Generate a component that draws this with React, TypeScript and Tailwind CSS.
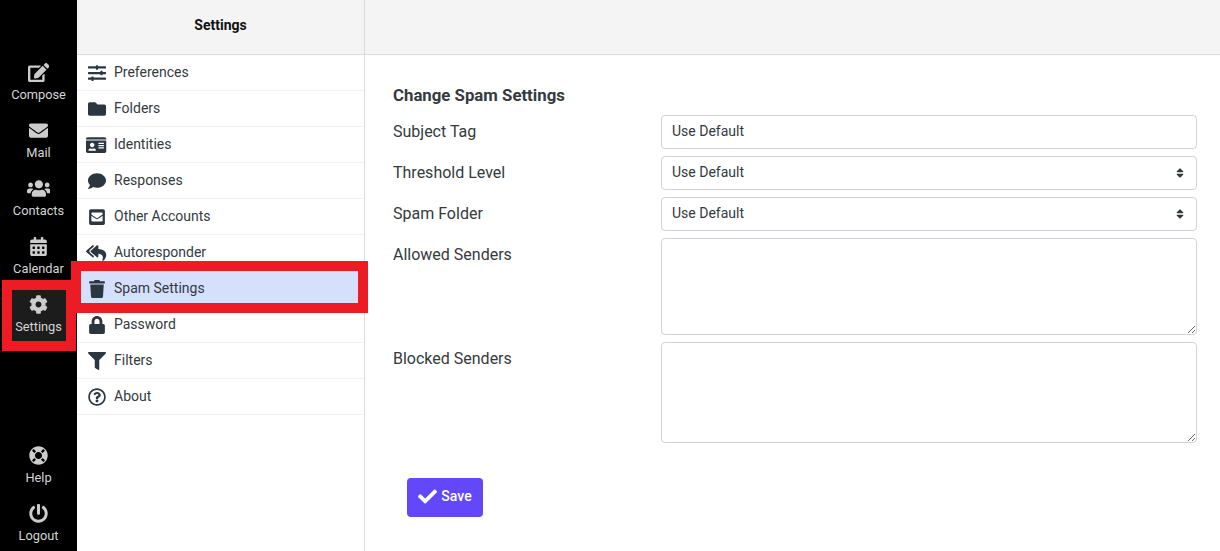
import React from 'react';
import {
  FaCalendarAlt,
  FaCheck,
  FaCog,
  FaComment,
  FaEdit,
  FaEnvelope,
  FaEnvelopeSquare,
  FaFilter,
  FaFolder,
  FaIdCard,
  FaLifeRing,
  FaLock,
  FaPowerOff,
  FaRegQuestionCircle,
  FaReplyAll,
  FaSlidersH,
  FaSort,
  FaTrash,
  FaUsers,
} from 'react-icons/fa';

// react-icons squeezes everything into a 1em box, wide glyphs need their real width back
const topNav = [
  { label: 'Compose', icon: FaEdit, iconWidth: 'w-[1.125em]' },
  { label: 'Mail', icon: FaEnvelope },
  { label: 'Contacts', icon: FaUsers, iconWidth: 'w-[1.25em]' },
  { label: 'Calendar', icon: FaCalendarAlt },
  { label: 'Settings', icon: FaCog, active: true },
];

const bottomNav = [
  { label: 'Help', icon: FaLifeRing },
  { label: 'Logout', icon: FaPowerOff },
];

const settingsItems = [
  { label: 'Preferences', icon: FaSlidersH },
  { label: 'Folders', icon: FaFolder },
  { label: 'Identities', icon: FaIdCard, iconWidth: 'w-[1.125em]' },
  { label: 'Responses', icon: FaComment },
  { label: 'Other Accounts', icon: FaEnvelopeSquare },
  { label: 'Autoresponder', icon: FaReplyAll, iconWidth: 'w-[1.125em]' },
  { label: 'Spam Settings', icon: FaTrash, active: true },
  { label: 'Password', icon: FaLock },
  { label: 'Filters', icon: FaFilter },
  { label: 'About', icon: FaRegQuestionCircle },
];

type NavItem = {
  label: string;
  icon: React.ComponentType<{ className?: string }>;
  iconWidth?: string;
  active?: boolean;
};

const RailLink = ({ item }: { item: NavItem }) => (
  <div
    className={`mx-auto flex h-[51px] w-[54px] flex-col items-center justify-end pb-[7px] text-[12.8px] leading-[15px] text-[#d4d4d4] ${
      item.active ? 'bg-[#1c1c1c]' : ''
    }`}
  >
    <item.icon className={`mb-[5px] shrink-0 text-[19px] text-[#cccccc] ${item.iconWidth ?? ''}`} />
    <span>{item.label}</span>
  </div>
);

const SelectField = () => (
  <div className="relative h-[34px]">
    <select className="h-full w-full appearance-none rounded border border-[#ced4da] bg-white pb-[2px] pl-[10px] pr-[11px] text-[14px] text-[#343a40] outline-none">
      <option>Use Default</option>
    </select>
    <FaSort className="pointer-events-none absolute right-[11px] top-[11px] text-[12px] text-[#343a40]" />
  </div>
);

const App = () => {
  return (
    <div className="relative flex h-[551px] w-[1220px] overflow-hidden bg-white font-['Roboto',sans-serif]">
      {/* Icon rail */}
      <aside className="flex w-[77px] shrink-0 flex-col bg-black pt-[58px]">
        <div className="flex flex-col gap-[7px]">
          {topNav.map((item) => (
            <RailLink key={item.label} item={item} />
          ))}
        </div>
        <div className="mt-auto flex flex-col gap-[7px] pb-px">
          {bottomNav.map((item) => (
            <RailLink key={item.label} item={item} />
          ))}
        </div>
      </aside>

      {/* Settings list */}
      <nav className="w-[288px] shrink-0 border-r border-[#d5dce4]">
        <div className="flex h-[55px] items-center justify-center border-b border-[#d5dce4] bg-[#f4f4f4] pb-[4px] text-[14px] font-bold text-[#111111]">
          Settings
        </div>
        <ul>
          {settingsItems.map((item: NavItem) => (
            <li
              key={item.label}
              className={`flex h-[36px] items-center gap-[8px] border-b border-[#f0f2f4] pl-[10px] text-[14px] text-[#343a40] ${
                item.active ? 'bg-[#d6e0fc]' : ''
              }`}
            >
              <span className="flex w-[19px] justify-center">
                <item.icon className={`shrink-0 text-[18px] text-[#2b3640] ${item.iconWidth ?? ''}`} />
              </span>
              {item.label}
            </li>
          ))}
        </ul>
      </nav>

      {/* Main content */}
      <main className="flex-1">
        <div className="h-[55px] border-b border-[#d5dce4] bg-[#f4f4f4]" />
        <div className="pl-[28px] pr-[23px] pt-[29px]">
          <h2 className="mb-[9px] text-[16.8px] font-bold leading-[22px] text-[#343a40]">Change Spam Settings</h2>
          <div className="grid grid-cols-[268px_536px] gap-y-[7px] text-[16px] text-[#343a40]">
            <label className="leading-[34px]">Subject Tag</label>
            <input
              defaultValue="Use Default"
              className="h-[34px] rounded border border-[#ced4da] pb-[2px] pl-[10px] pr-[11px] text-[14px] text-[#343a40] outline-none"
            />
            <label className="leading-[34px]">Threshold Level</label>
            <SelectField />
            <label className="leading-[34px]">Spam Folder</label>
            <SelectField />
            <label className="leading-[34px]">Allowed Senders</label>
            <textarea className="block h-[97px] rounded border border-[#ced4da] outline-none" />
            <label className="leading-[34px]">Blocked Senders</label>
            <textarea className="block h-[101px] rounded border border-[#ced4da] outline-none" />
          </div>
          <button className="ml-[14px] mt-[35px] flex h-[39px] w-[76px] items-center justify-center gap-[4px] rounded bg-[#6247fb] pb-[2px] text-[14px] font-medium text-white">
            <FaCheck className="shrink-0 text-[19px]" />
            Save
          </button>
        </div>
      </main>

      {/* Red annotation boxes */}
      <div className="pointer-events-none absolute left-[2px] top-[280px] h-[71px] w-[74px] border-[10px] border-[#ed1c24]" />
      <div className="pointer-events-none absolute left-[71px] top-[261px] h-[52px] w-[297px] border-[10px] border-[#ed1c24]" />
    </div>
  );
};

export default App;
